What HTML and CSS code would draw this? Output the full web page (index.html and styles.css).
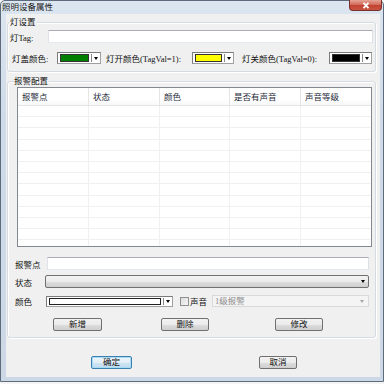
FILE: index.html
```html
<!DOCTYPE html>
<html lang="zh-CN">
<head>
<meta charset="utf-8">
<title>照明设备属性</title>
<link rel="stylesheet" href="styles.css">
</head>
<body>
<div class="window">
  <div class="titlebar">
    <span class="title">照明设备属性</span>
    <span class="close"><svg width="10" height="7" viewBox="0 0 10 7"><path d="M2.5 0.8 L7.5 6.2 M7.5 0.8 L2.5 6.2" stroke="#fff" stroke-width="1.8" fill="none"/></svg></span>
  </div>
  <div class="client">
    <div class="group g1">
      <span class="legend">灯设置</span>
      <div class="row r-tag">
        <span class="lbl w-tag">灯Tag:</span>
        <span class="textbox grow"></span>
      </div>
      <div class="row r-colors">
        <span class="lbl w-l1">灯盖颜色:</span>
        <span class="colorcombo w-c1"><span class="swatch green"></span><span class="drop"><i class="tri"></i></span></span>
        <span class="lbl w-l2">灯开颜色(TagVal=1):</span>
        <span class="colorcombo w-c2"><span class="swatch yellow"></span><span class="drop"><i class="tri"></i></span></span>
        <span class="lbl w-l3">灯关颜色(TagVal=0):</span>
        <span class="colorcombo w-c3"><span class="swatch black"></span><span class="drop"><i class="tri"></i></span></span>
      </div>
    </div>
    <div class="group g2">
      <span class="legend">报警配置</span>
      <div class="list">
        <div class="lrow head">
          <span>报警点</span><span>状态</span><span>颜色</span><span>是否有声音</span><span>声音等级</span>
        </div>
        <div class="lrow"><span></span><span></span><span></span><span></span><span></span></div>
        <div class="lrow"><span></span><span></span><span></span><span></span><span></span></div>
        <div class="lrow"><span></span><span></span><span></span><span></span><span></span></div>
        <div class="lrow"><span></span><span></span><span></span><span></span><span></span></div>
        <div class="lrow"><span></span><span></span><span></span><span></span><span></span></div>
        <div class="lrow"><span></span><span></span><span></span><span></span><span></span></div>
        <div class="lrow"><span></span><span></span><span></span><span></span><span></span></div>
        <div class="lrow"><span></span><span></span><span></span><span></span><span></span></div>
        <div class="lrow"><span></span><span></span><span></span><span></span><span></span></div>
        <div class="lrow"><span></span><span></span><span></span><span></span><span></span></div>
        <div class="lrow"><span></span><span></span><span></span><span></span><span></span></div>
        <div class="lrow"><span></span><span></span><span></span><span></span><span></span></div>
        <div class="lrow"><span></span><span></span><span></span><span></span><span></span></div>
      </div>
      <div class="row f-point">
        <span class="lbl w-f1">报警点</span>
        <span class="textbox grow"></span>
      </div>
      <div class="row f-state">
        <span class="lbl w-f2">状态</span>
        <span class="btncombo grow"><i class="tri"></i></span>
      </div>
      <div class="row f-color">
        <span class="lbl w-f3">颜色</span>
        <span class="colorcombo w-fc"><span class="swatch white"></span><span class="drop"><i class="tri"></i></span></span>
        <span class="check"></span>
        <span class="lbl snd">声音</span>
        <span class="discombo grow"><span class="distext">1级报警</span><i class="tri gray"></i></span>
      </div>
      <div class="row f-btns">
        <span class="btn b-add">新增</span>
        <span class="btn b-del">删除</span>
        <span class="btn b-mod">修改</span>
      </div>
    </div>
    <div class="row okrow">
      <span class="btn default b-ok">确定</span>
      <span class="btn b-cancel">取消</span>
    </div>
  </div>
</div>
</body>
</html>
```
FILE: styles.css
```css
* { box-sizing: border-box; }
html, body { margin: 0; padding: 0; }
body {
  width: 384px;
  height: 384px;
  overflow: hidden;
  background: #f4f4f4;
  font-family: "Liberation Serif", "Noto Sans CJK SC", serif;
  font-size: 8.5px;
  color: #111;
}
.window {
  width: 384px;
  height: 382px;
  border: 1px solid #5d6b7c;
  border-radius: 5px 5px 0 0;
  background: linear-gradient(#dce6f1, #cfdbe8 30%, #ccd8e5);
  padding: 0 3px 4px 5px;
  display: flex;
  flex-direction: column;
}
.titlebar {
  height: 13px;
  margin-left: -4px;
  display: flex;
  align-items: flex-start;
}
.title {
  line-height: 13px;
  font-size: 8.5px;
  color: #1a1a1a;
}
.close {
  margin-left: auto;
  margin-top: -1px;
  margin-right: -2px;
  width: 33px;
  height: 11px;
  border: 1px solid #7a3030;
  border-top: none;
  border-radius: 0 0 4px 4px;
  background: linear-gradient(#e6a597, #d36d5c 45%, #c24333 55%, #c8553f);
  display: flex;
  align-items: center;
  justify-content: center;
}
.client {
  flex: 1;
  background: #f0f0f0;
  display: flex;
  flex-direction: column;
}
.group {
  border: 1px solid #d5dbe1;
  border-radius: 3px;
  box-shadow: inset 1px 1px 0 #fff, 1px 1px 0 #fff;
  margin: 0 4px 0 1px;
  display: flex;
  flex-direction: column;
}
.g1 { margin-top: 8px; padding: 0 2px 7px 2px; }
.g2 { margin-top: 9px; padding: 0 3px 6px 7px; }
.legend {
  align-self: flex-start;
  margin-top: -6px;
  height: 10px;
  line-height: 10px;
  background: #f0f0f0;
  padding-right: 1px;
}
.g2 .legend { margin-left: -1px; }
.row { display: flex; align-items: center; }
.lbl { white-space: nowrap; flex: none; }
.grow { flex: 1; }
.r-tag { margin-top: 3px; height: 13px; }
.w-tag { width: 38px; }
.r-colors { margin-top: 9px; height: 12px; }
.w-l1 { width: 45px; margin-left: 2px; }
.w-c1 { width: 44px; }
.w-l2 { width: 86px; margin-left: 5px; }
.w-c2 { width: 42px; }
.w-l3 { width: 87px; margin-left: 8px; }
.w-c3 { width: 43px; }
.textbox {
  height: 13px;
  background: #fff;
  border: 1px solid;
  border-color: #abadb3 #dbdfe6 #e3e9ef #e2e3ea;
}
.f-point .textbox { margin-right: 3px; }
.colorcombo {
  height: 12px;
  display: flex;
  background: #fff;
  border: 1px solid #7b7b7b;
  border-right-color: #a0a0a0;
  border-bottom-color: #a0a0a0;
  padding: 1px 0 1px 2px;
  flex: none;
}
.swatch {
  flex: 1;
  border: 1px solid #333;
}
.swatch.green { background: #008000; }
.swatch.yellow { background: #ffff00; }
.swatch.black { background: #000; }
.swatch.white { background: #fff; border-color: #222; }
.drop {
  width: 9px;
  margin-left: 2px;
  border-left: 1px solid #8a8a8a;
  display: flex;
  align-items: center;
  justify-content: center;
  flex: none;
}
.tri {
  display: block;
  width: 0;
  height: 0;
  border-left: 2.5px solid transparent;
  border-right: 2.5px solid transparent;
  border-top: 3px solid #000;
}
.tri.gray { border-top-color: #a8a8a8; }
.list {
  margin: 1px 0 0 2px;
  height: 160px;
  background: #fff;
  border: 1px solid #828790;
  overflow: hidden;
}
.lrow {
  display: grid;
  grid-template-columns: 71px 71px 70px 71px 1fr;
  height: 11.2px;
  border-bottom: 1px solid #f0f0f0;
}
.lrow span { border-right: 1px solid #f0f0f0; }
.lrow span:last-child { border-right: none; }
.lrow.head {
  height: 18px;
  border-bottom: 1px solid #e5e5e5;
  background: linear-gradient(#fff, #fff 60%, #f7f8fa);
}
.lrow.head span {
  border-right: 1px solid #e5e5e5;
  padding: 4px 0 0 4px;
  line-height: 10px;
  color: #1e2a3a;
}
.lrow.head span:last-child { border-right: none; }
.f-point { margin-top: 10px; height: 13px; }
.w-f1 { width: 32px; }
.f-state { margin-top: 5px; height: 13px; }
.w-f2 { width: 30px; }
.btncombo {
  height: 13px;
  margin-right: 3px;
  border: 1px solid #707070;
  border-radius: 2px;
  background: linear-gradient(#f2f2f2, #ebebeb 50%, #dddddd 51%, #cfcfcf);
  display: flex;
  align-items: center;
  justify-content: flex-end;
  padding-right: 3px;
}
.f-color { margin-top: 7px; height: 12px; }
.w-f3 { width: 31px; }
.w-fc { width: 127px; height: 11px; }
.check {
  width: 9px;
  height: 9px;
  margin-left: 7px;
  border: 1px solid #8e8f8f;
  background: linear-gradient(135deg, #dcdcdc, #f6f6f6);
  flex: none;
}
.snd { margin-left: 1px; }
.discombo {
  height: 12px;
  margin-left: 5px;
  margin-right: 3px;
  border: 1px solid #d9d9d9;
  background: #f4f4f4;
  display: flex;
  align-items: center;
  justify-content: space-between;
  padding: 0 4px 0 2px;
}
.distext { color: #8d8d8d; line-height: 10px; }
.f-btns { margin-top: 11px; height: 13px; }
.btn {
  height: 13px;
  line-height: 11px;
  text-align: center;
  border: 1px solid #707070;
  border-radius: 2px;
  background: linear-gradient(#f2f2f2, #ebebeb 50%, #dddddd 51%, #cfcfcf);
  flex: none;
}
.btn.default {
  border-color: #3c7fb1;
  box-shadow: inset 0 0 0 1px #a6dcf5;
  background: linear-gradient(#edf5fb, #e2eef8 50%, #cfe4f3 51%, #c0dbef);
}
.b-add { width: 49px; margin-left: 38px; }
.b-del { width: 48px; margin-left: 59px; }
.b-mod { width: 48px; margin-left: 66px; }
.okrow { margin-top: 18px; height: 13px; }
.b-ok { width: 41px; margin-left: 85px; }
.b-cancel { width: 38px; margin-left: 127px; }
```
